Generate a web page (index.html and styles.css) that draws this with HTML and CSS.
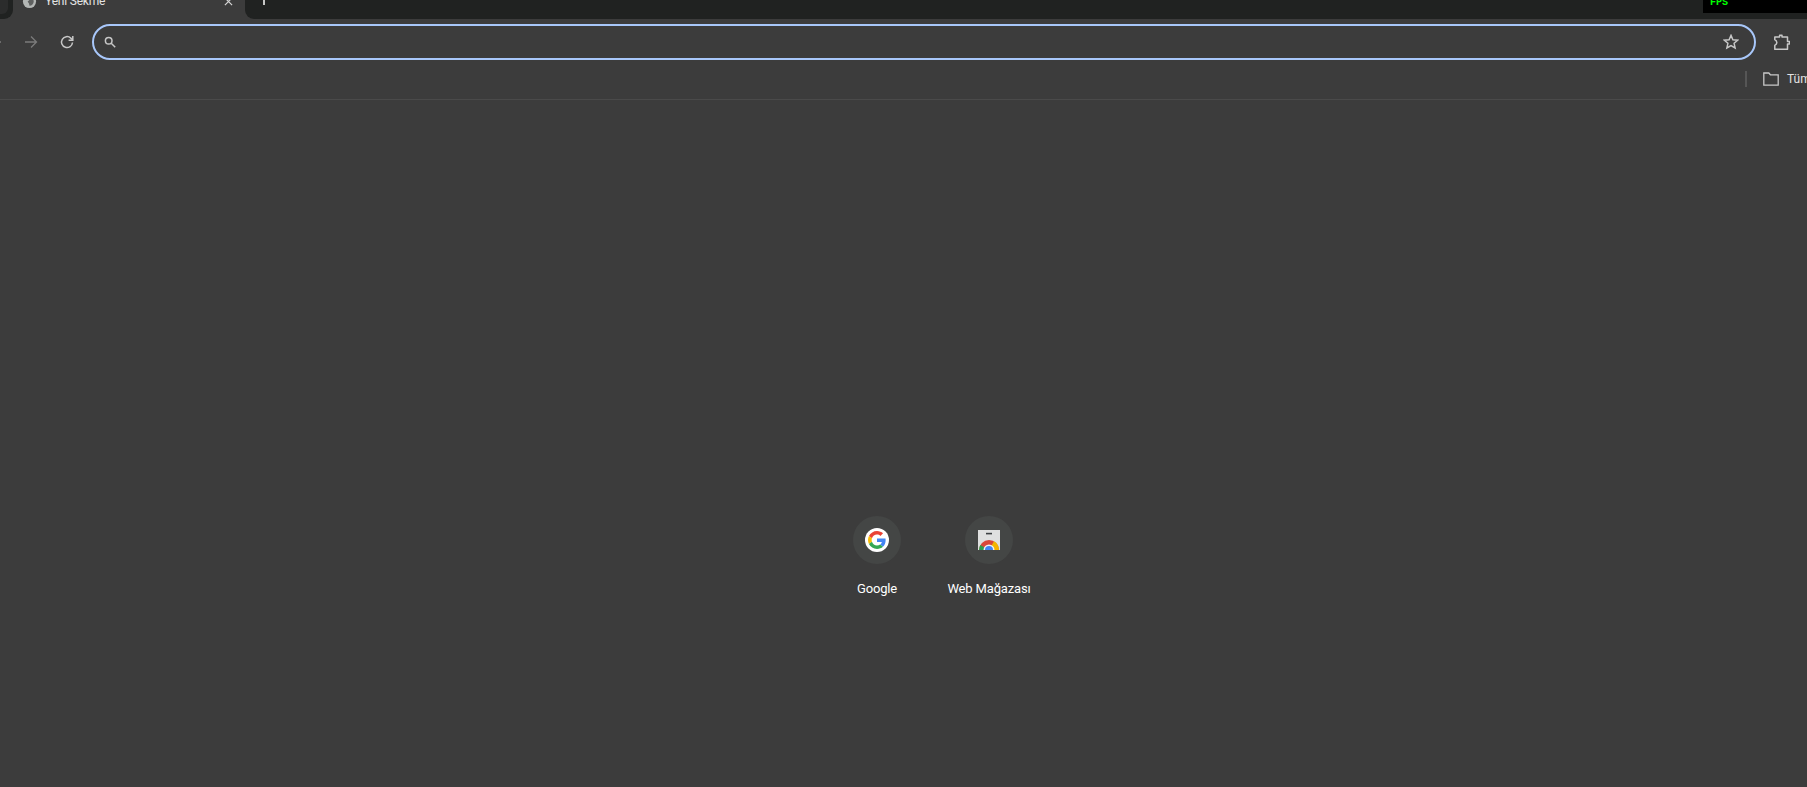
FILE: index.html
```html
<!DOCTYPE html>
<html lang="tr">
<head>
<meta charset="utf-8">
<title>Yeni Sekme</title>
<link rel="stylesheet" href="styles.css">
</head>
<body>
<div class="browser">
  <header class="tabstrip">
    <div class="strip-left"><span class="prev-tab"></span></div>
    <div class="tab">
      <svg class="tab-favicon" viewBox="0 0 16 16"><circle cx="8" cy="8" r="7" fill="#b4b7b5"/><path d="M8 3.500a4.500 4.500 0 0 1 0 9 7 7 0 0 0-2-4.500A4 4 0 0 0 8 3.500z" fill="#5f6160"/></svg>
      <span class="tab-title">Yeni Sekme</span>
      <svg class="tab-close" viewBox="0 0 10 10"><path d="M1 1l8 8M9 1l-8 8" stroke="#d6d6d6" stroke-width="1.300" fill="none"/></svg>
    </div>
    <div class="strip-right">
      <span class="new-tab"></span>
    </div>
  </header>

  <div class="fps"><span>FPS</span></div>

  <nav class="toolbar">
    <button class="nav-btn back" aria-label="Geri">
      <svg viewBox="0 0 16 16"><path d="M14 8H2.500M8 2.500L2.500 8 8 13.500" class="ico dim"/></svg>
    </button>
    <button class="nav-btn" aria-label="İleri">
      <svg viewBox="0 0 16 16"><path d="M2 8h11.500M8 2.500L13.500 8 8 13.500" class="ico dim"/></svg>
    </button>
    <button class="nav-btn" aria-label="Yenile">
      <svg viewBox="0 0 16 16"><path d="M13.500 8.500A5.500 5.500 0 1 1 11.800 4.100L13.500 5.800" class="ico thick"/><path d="M13.800 2v4.200H9.600" class="ico thick"/></svg>
    </button>
    <div class="omnibox">
      <svg class="omni-search" viewBox="0 0 12 12"><circle cx="4.700" cy="4.700" r="3.300" class="ico thick"/><path d="M7.200 7.200l4 4" class="ico thick"/></svg>
      <svg class="omni-star" viewBox="0 0 16 16"><path d="M8 1.400l1.900 4.300 4.700.5-3.500 3.100 1 4.600L8 11.500l-4.100 2.400 1-4.600L1.400 6.200l4.700-.5z" class="ico thick"/></svg>
    </div>
    <button class="ext-btn" aria-label="Uzantılar">
      <svg viewBox="0 0 16 16"><path d="M.8 3H5.600V1.200H8V3H13.500V7.500H15.500V10H13.500V15.300H.8V11.300Q3 10 2.800 8.500 2.800 7 .8 5.700z" class="ico thick join"/></svg>
    </button>
  </nav>

  <div class="bookmarks">
    <span class="bm-sep"></span>
    <svg class="bm-folder" viewBox="0 0 16 14"><path d="M.8 1h5l1.600 1.800h7.800v10.400H.8z" class="ico"/></svg>
    <span class="bm-label">Tüm yer imleri</span>
  </div>

  <main class="ntp">
    <div class="tiles">
      <a class="tile">
        <span class="tile-icon">
          <span class="g-badge">
            <svg viewBox="0 0 48 48"><path fill="#EA4335" d="M24 9.500c3.540 0 6.710 1.220 9.210 3.600l6.850-6.850C35.900 2.380 30.470 0 24 0 14.620 0 6.510 5.380 2.560 13.220l7.980 6.190C12.430 13.720 17.740 9.500 24 9.500z"/><path fill="#4285F4" d="M46.980 24.550c0-1.570-.15-3.090-.38-4.550H24v9.020h12.940c-.58 2.960-2.260 5.480-4.780 7.180l7.730 6c4.510-4.180 7.090-10.360 7.090-17.650z"/><path fill="#FBBC05" d="M10.530 28.590c-.48-1.450-.76-2.990-.76-4.590s.27-3.140.76-4.590l-7.980-6.190C.92 16.460 0 20.120 0 24c0 3.880.92 7.540 2.560 10.780l7.970-6.190z"/><path fill="#34A853" d="M24 48c6.480 0 11.930-2.130 15.890-5.810l-7.730-6c-2.150 1.450-4.920 2.300-8.160 2.300-6.260 0-11.570-4.220-13.470-9.910l-7.980 6.190C6.510 42.620 14.620 48 24 48z"/></svg>
          </span>
        </span>
        <span class="tile-label">Google</span>
      </a>
      <a class="tile">
        <span class="tile-icon">
          <svg class="store" viewBox="0 0 22 20">
            <rect x="0" y="0" width="22" height="20" fill="#dfe0e0"/>
            <rect x="8" y="2.800" width="6" height="1.600" fill="#3c4043"/>
            <path d="M1 20A10 10 0 0 1 21 20z" fill="#d9483b"/>
            <path d="M11 20L16 11.340A10 10 0 0 1 21 20z" fill="#f4b400"/>
            <path d="M11 20L2.340 15A10 10 0 0 0 1 20z" fill="#2f9e4f"/>
            <circle cx="11" cy="20" r="5.500" fill="#f1f1f1"/>
            <circle cx="11" cy="20" r="4" fill="#4285f4"/>
          </svg>
        </span>
        <span class="tile-label">Web Mağazası</span>
      </a>
    </div>
  </main>
</div>
</body>
</html>
```
FILE: styles.css
```css
* { box-sizing: border-box; }
html, body { margin: 0; height: 100%; overflow: hidden; }
body { background: #3c3c3c; font-family: Roboto, "Liberation Sans", sans-serif; color: #e3e3e3; }

.browser { position: relative; height: 787px; display: flex; flex-direction: column; overflow: hidden; }

.tabstrip { height: 19px; display: flex; flex: none; overflow: hidden; background: #3c3c3c; }
.strip-left { width: 13px; flex: none; background: #202221; border-bottom-right-radius: 9px; }
.prev-tab { display: block; width: 8px; height: 14px; background: #2b2c2c; border-bottom-right-radius: 6px; }
.tab { width: 232px; flex: none; display: flex; align-items: center; height: 18px; margin-top: -8px; padding-left: 9px; }
.tab-favicon { width: 15px; height: 15px; flex: none; }
.tab-title { margin-left: 8px; font-size: 12px; letter-spacing: -.2px; color: #e3e3e3; white-space: nowrap; }
.tab-close { width: 9px; height: 9px; flex: none; margin-left: auto; margin-right: 12px; }
.strip-right { flex: 1; background: #202221; border-bottom-left-radius: 9px; padding-left: 18px; }
.new-tab { display: block; width: 2px; height: 5px; background: #c7c7c7; }

.fps { position: absolute; top: 0; right: 0; width: 104px; height: 13px; background: #000; padding-left: 7px; overflow: hidden; }
.fps span { display: block; margin-top: -5px; font: 700 10px/15px "Liberation Mono", monospace; color: #00ff00; }

.toolbar { height: 46px; flex: none; display: flex; align-items: center; }
.nav-btn, .ext-btn { width: 36px; height: 36px; flex: none; padding: 0; border: 0; background: none; display: flex; align-items: center; justify-content: center; }
.nav-btn svg { width: 16px; height: 16px; }
.back { margin-left: -23px; }
.omnibox { width: 1664px; height: 36px; flex: none; margin-left: 7px; border: 2px solid #a8c7fa; border-radius: 18px; display: flex; align-items: center; justify-content: space-between; padding: 0 15px 0 10px; }
.omni-search { width: 12px; height: 12px; }
.omni-star { width: 16px; height: 16px; }
.ext-btn { margin-left: 8px; }
.ext-btn svg { width: 16px; height: 16px; }

.ico { fill: none; stroke: #c7c7c7; stroke-width: 1.300; }
.ico.dim { stroke: #7b7b7b; }
.ico.thick { stroke-width: 1.500; }
.ico.join { stroke-linejoin: round; }

.bookmarks { height: 35px; flex: none; display: flex; align-items: center; border-bottom: 1px solid #4a4a4a; padding: 0 0 6px 1745px; overflow: hidden; white-space: nowrap; }
.bm-sep { width: 2px; height: 16px; background: #565656; flex: none; }
.bm-folder { width: 16px; height: 14px; flex: none; margin-left: 16px; }
.bm-label { margin-left: 8px; font-size: 12px; color: #e3e3e3; }

.ntp { flex: 1; display: flex; padding: 416px 0 0 821px; }
.tiles { display: flex; }
.tile { width: 112px; display: flex; flex-direction: column; align-items: center; }
.tile-icon { width: 48px; height: 48px; border-radius: 50%; background: #444645; display: flex; align-items: center; justify-content: center; }
.tile-label { margin-top: 17px; font-size: 13px; line-height: 16px; letter-spacing: -.15px; color: #fff; white-space: nowrap; }
.g-badge { width: 24px; height: 24px; border-radius: 50%; background: #fff; display: flex; align-items: center; justify-content: center; }
.g-badge svg { width: 18px; height: 18px; }
.store { width: 22px; height: 20px; }
```
